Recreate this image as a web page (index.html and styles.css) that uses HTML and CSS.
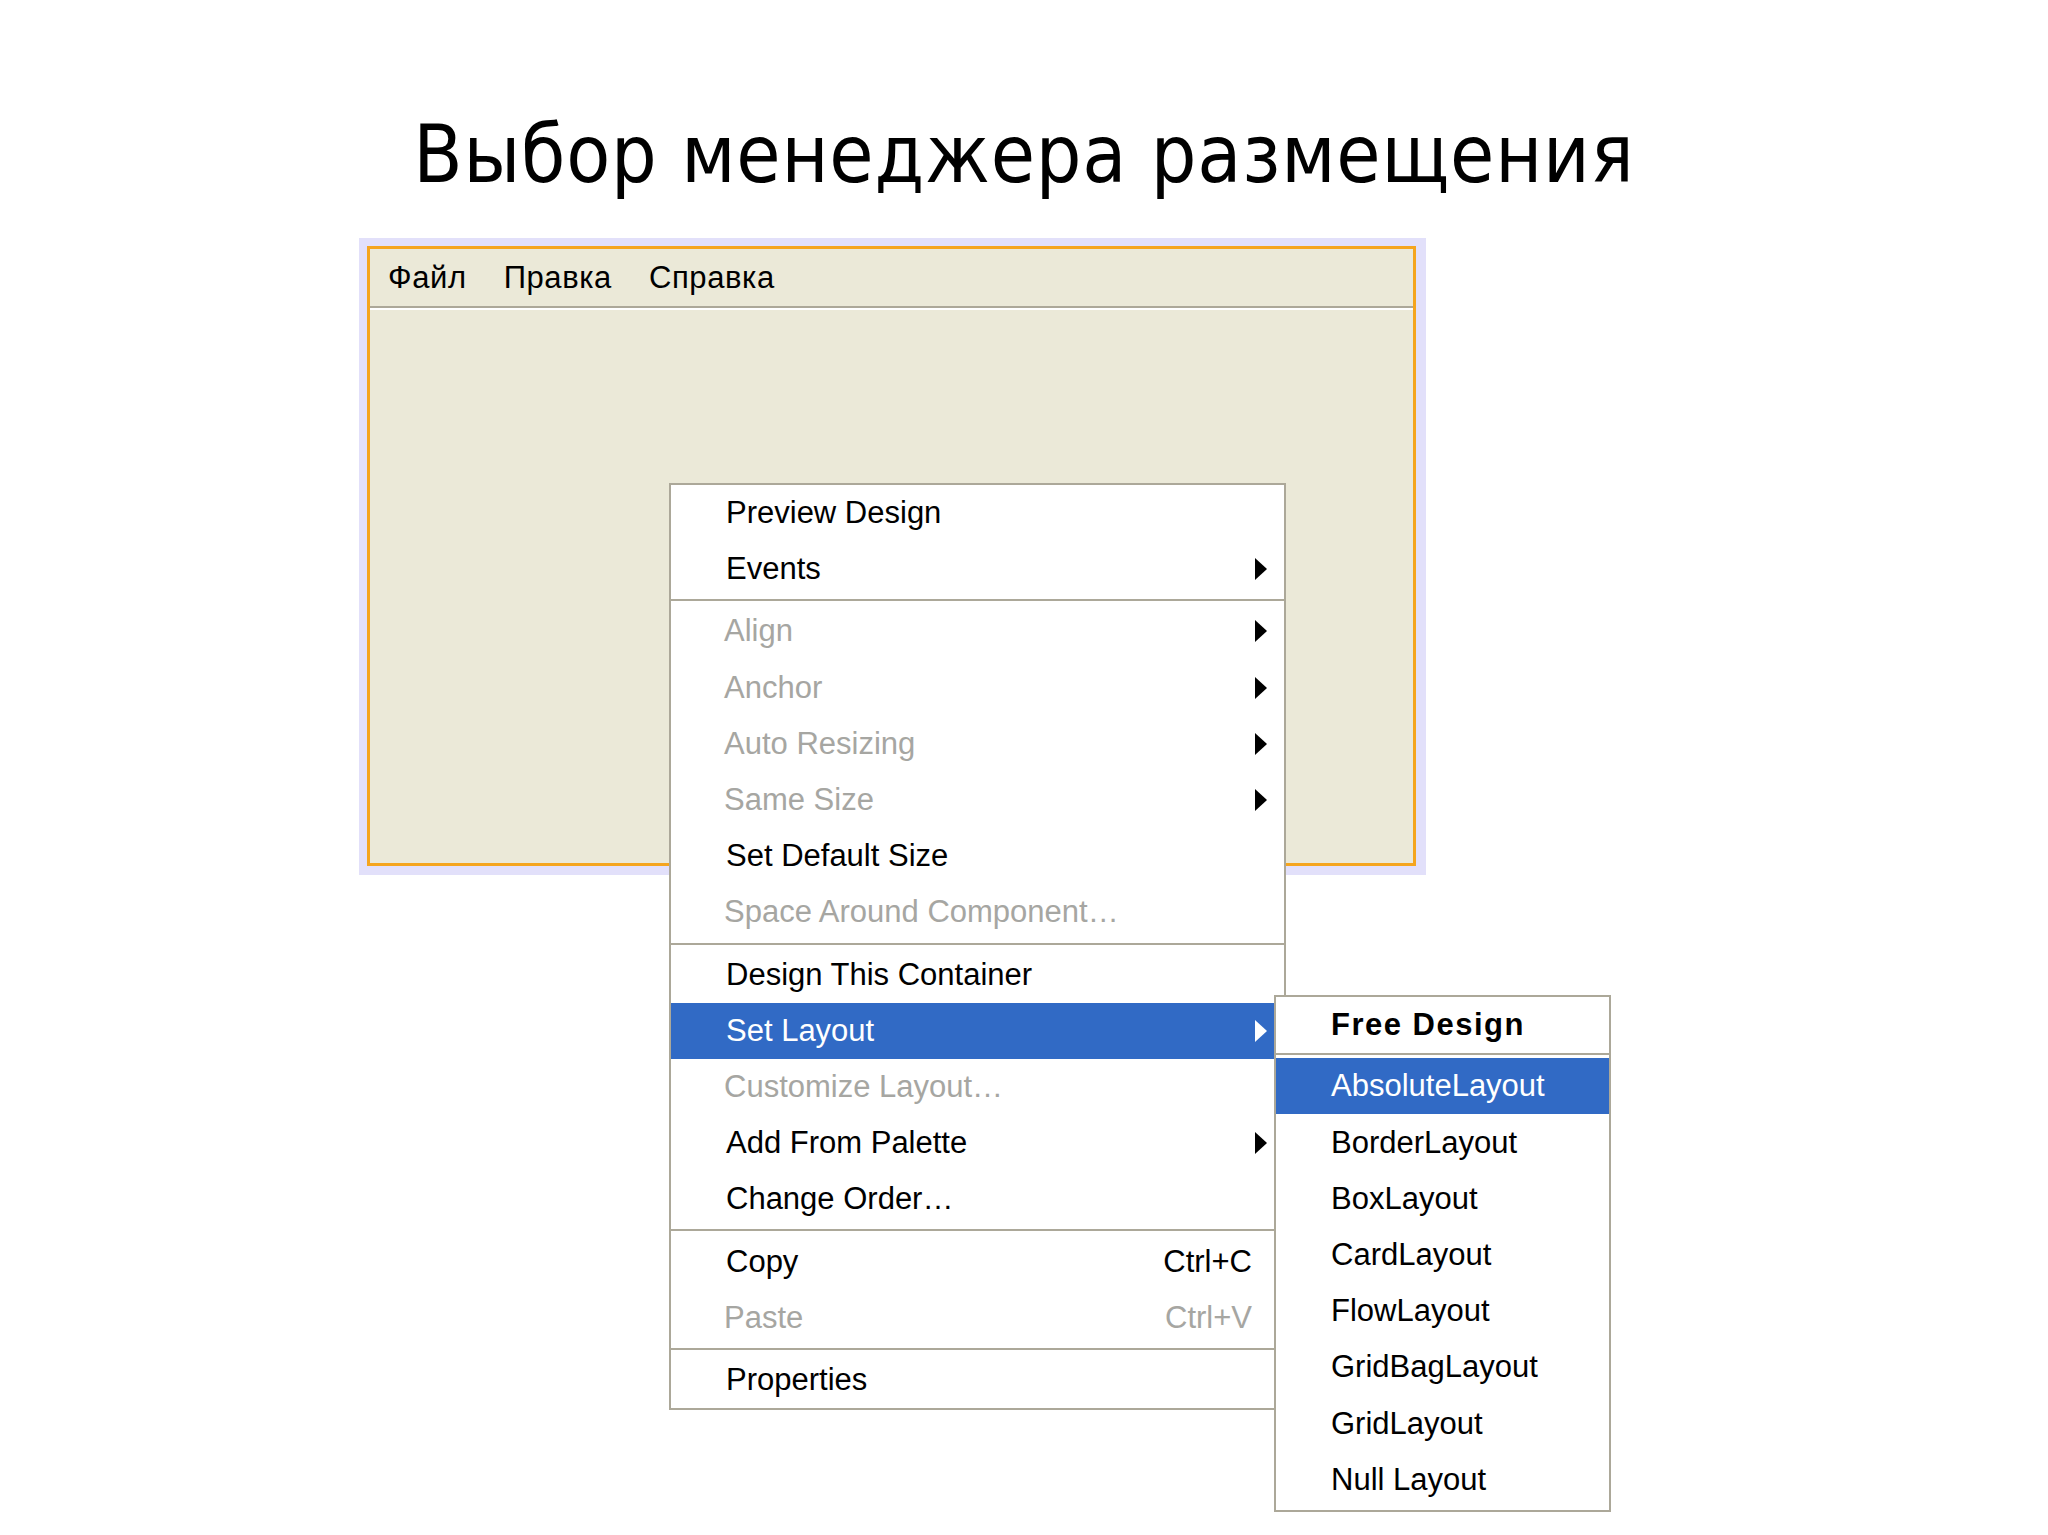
FILE: index.html
```html
<!DOCTYPE html>
<html lang="ru">
<head>
    <meta charset="UTF-8">
    <meta name="viewport" content="width=device-width, initial-scale=1.0">
    <title>Выбор менеджера размещения</title>
    <link rel="stylesheet" href="styles.css">
</head>
<body>
    <h1 class="slide-title">Выбор менеджера размещения</h1>

    <div class="stage">
        <div class="frame">
            <div class="window">
                <div class="menubar">
                    <span class="menubar-item">Файл</span>
                    <span class="menubar-item">Правка</span>
                    <span class="menubar-item">Справка</span>
                </div>
                <div class="client"></div>
            </div>
        </div>

        <div class="popup">
            <div class="item"><span class="label">Preview Design</span></div>
            <div class="item"><span class="label">Events</span><span class="arrow"></span></div>
            <div class="sep"></div>
            <div class="item disabled"><span class="label">Align</span><span class="arrow"></span></div>
            <div class="item disabled"><span class="label">Anchor</span><span class="arrow"></span></div>
            <div class="item disabled"><span class="label">Auto Resizing</span><span class="arrow"></span></div>
            <div class="item disabled"><span class="label">Same Size</span><span class="arrow"></span></div>
            <div class="item"><span class="label">Set Default Size</span></div>
            <div class="item disabled"><span class="label">Space Around Component…</span></div>
            <div class="sep"></div>
            <div class="item"><span class="label">Design This Container</span></div>
            <div class="item active"><span class="label">Set Layout</span><span class="arrow"></span></div>
            <div class="item disabled"><span class="label">Customize Layout…</span></div>
            <div class="item"><span class="label">Add From Palette</span><span class="arrow"></span></div>
            <div class="item"><span class="label">Change Order…</span></div>
            <div class="sep"></div>
            <div class="item"><span class="label">Copy</span><span class="shortcut">Ctrl+C</span></div>
            <div class="item disabled"><span class="label">Paste</span><span class="shortcut">Ctrl+V</span></div>
            <div class="sep"></div>
            <div class="item"><span class="label">Properties</span></div>

            <div class="submenu">
                <div class="item bold"><span class="label">Free Design</span></div>
                <div class="sub-sep"></div>
                <div class="item active"><span class="label">AbsoluteLayout</span></div>
                <div class="item"><span class="label">BorderLayout</span></div>
                <div class="item"><span class="label">BoxLayout</span></div>
                <div class="item"><span class="label">CardLayout</span></div>
                <div class="item"><span class="label">FlowLayout</span></div>
                <div class="item"><span class="label">GridBagLayout</span></div>
                <div class="item"><span class="label">GridLayout</span></div>
                <div class="item"><span class="label">Null Layout</span></div>
            </div>
        </div>
    </div>
</body>
</html>
```

FILE: styles.css
```css
body {
    margin: 0;
    background-color: #fff;
    font-family: "Liberation Sans", Arial, sans-serif;
    color: #000;
}
.slide-title {
    margin: 0;
    padding-top: 115px;
    font-family: "DejaVu Sans Condensed", "DejaVu Sans", Verdana, sans-serif;
    font-stretch: semi-condensed;
    font-size: 80px;
    line-height: 80px;
    font-weight: normal;
    letter-spacing: 0.8px;
    text-align: center;
}
.stage {
    position: relative;
    height: 1297px;
    margin-top: 43px;
}
.frame {
    margin-left: 359px;
    width: 1067px;
    height: 637px;
    box-sizing: border-box;
    padding: 8px 10px 9px 8px;
    background-color: #e2e0fa;
}
.window {
    height: 100%;
    box-sizing: border-box;
    border: 3px solid #f5a51e;
    background-color: #ebe9d8;
}
.menubar {
    display: flex;
    align-items: center;
    height: 57px;
    border-bottom: 2px solid #aca899;
    box-shadow: 0 2px 0 #fff;
    font-size: 31px;
}
.menubar-item {
    padding: 0 19px 0 18px;
    letter-spacing: 0.6px;
}
.popup {
    position: absolute;
    left: 669px;
    top: 245px;
    width: 617px;
    box-sizing: border-box;
    border: 2px solid #aca899;
    background-color: #fff;
    z-index: 1;
}
.item {
    display: flex;
    align-items: center;
    height: 56.2px;
    padding-left: 55px;
    font-size: 31px;
}
.item .label {
    flex: 1;
    white-space: nowrap;
}
.item.disabled {
    padding-left: 53px;
    color: #a6a6a2;
}
.item.active {
    background-color: #316ac5;
    color: #fff;
}
.item.bold {
    height: 56.3px;
    font-weight: bold;
    letter-spacing: 1.5px;
}
.arrow {
    width: 0;
    height: 0;
    margin-right: 17px;
    border-left: 12px solid #000;
    border-top: 11.5px solid transparent;
    border-bottom: 11.5px solid transparent;
}
.item.active .arrow {
    border-left-color: #fff;
}
.shortcut {
    margin-right: 32px;
}
.sep {
    height: 2px;
    margin: 2px 0;
    background-color: #aca899;
}
.submenu {
    position: absolute;
    left: 603px;
    top: 510px;
    width: 337px;
    box-sizing: border-box;
    padding-bottom: 2px;
    border: 2px solid #aca899;
    background-color: #fff;
}
.sub-sep {
    height: 2px;
    border-bottom: 3px solid #fff;
    background-color: #aca899;
}
```
